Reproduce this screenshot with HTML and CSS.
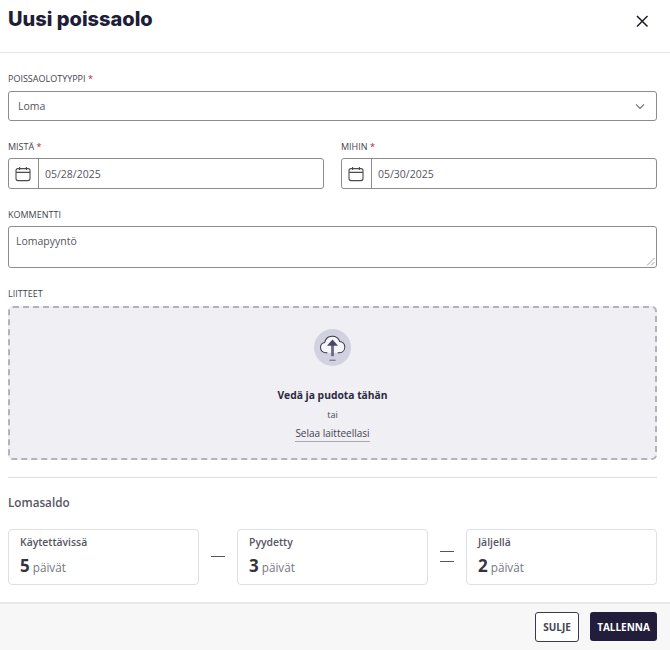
FILE: index.html
```html
<!DOCTYPE html>
<html lang="fi">
<head>
<meta charset="utf-8">
<title>Uusi poissaolo</title>
<link rel="stylesheet" href="styles.css">
</head>
<body>
<div class="dialog">
  <header class="head">
    <h1 class="title">Uusi poissaolo</h1>
    <button class="close" aria-label="Sulje">
      <svg width="14" height="14" viewBox="0 0 14 14"><path d="M2 2 12.5 12.5M12.5 2 2 12.5" stroke="#1c1c28" stroke-width="1.5" fill="none"/></svg>
    </button>
  </header>
  <main class="body">
    <div class="field type-field">
      <label class="label">POISSAOLOTYYPPI <span class="req">*</span></label>
      <div class="box select">
        <span>Loma</span>
        <svg width="10" height="7" viewBox="0 0 12 8"><path d="M1.2 1.5 6 6.2 10.8 1.5" stroke="#6d6d76" stroke-width="1.4" fill="none"/></svg>
      </div>
    </div>
    <div class="dates">
      <div class="field">
        <label class="label tight">MISTÄ <span class="req">*</span></label>
        <div class="box date">
          <span class="cal">
            <svg width="16" height="16" viewBox="0 0 16 16" fill="none" stroke="#4a4a55" stroke-width="1.1"><rect x="1" y="2.6" width="14" height="12" rx="2"/><path d="M1 6.4H15M4.6 1V4M11.4 1V4"/></svg>
          </span>
          <span class="date-val">05/28/2025</span>
        </div>
      </div>
      <div class="field">
        <label class="label tight">MIHIN <span class="req">*</span></label>
        <div class="box date">
          <span class="cal">
            <svg width="16" height="16" viewBox="0 0 16 16" fill="none" stroke="#4a4a55" stroke-width="1.1"><rect x="1" y="2.6" width="14" height="12" rx="2"/><path d="M1 6.4H15M4.6 1V4M11.4 1V4"/></svg>
          </span>
          <span class="date-val">05/30/2025</span>
        </div>
      </div>
    </div>
    <div class="field comment-field">
      <label class="label tight">KOMMENTTI</label>
      <div class="box area">
        <span>Lomapyyntö</span>
        <svg class="grip" width="9" height="9" viewBox="0 0 9 9"><path d="M8.5 1 1 8.5M8.5 5 5 8.5" stroke="#a0a0a0" stroke-width="1" fill="none"/></svg>
      </div>
    </div>
    <div class="field attach-field">
      <label class="label">LIITTEET</label>
      <div class="drop">
        <span class="drop-icon">
          <svg width="37" height="37" viewBox="0 0 36 36">
            <circle cx="18" cy="18" r="18" fill="#d2d1e0"/>
            <path d="M13 23H11a5 5 0 0 1-.6-9.9 7.6 7.6 0 0 1 14.6-1 5.5 5.5 0 0 1 .4 10.9H23" fill="#f6f6fa" stroke="#3d3a55" stroke-width="1"/>
            <path d="M18 15V26.5" stroke="#6f6a92" stroke-width="2.8" fill="none"/>
            <path d="M12.6 16.4 18 10.2 23.4 16.4Z" fill="#4a4568"/>
            <path d="M15 30.4H21" stroke="#77748f" stroke-width="1.2"/>
          </svg>
        </span>
        <strong class="drop-title">Vedä ja pudota tähän</strong>
        <span class="drop-or">tai</span>
        <span class="drop-link">Selaa laitteellasi</span>
      </div>
    </div>
    <hr class="rule">
    <h2 class="section">Lomasaldo</h2>
    <div class="balance">
      <div class="card">
        <div class="card-label">Käytettävissä</div>
        <div class="card-val"><b>5</b> päivät</div>
      </div>
      <div class="op"><span class="minus"></span></div>
      <div class="card">
        <div class="card-label">Pyydetty</div>
        <div class="card-val"><b>3</b> päivät</div>
      </div>
      <div class="op"><span class="equals"></span></div>
      <div class="card">
        <div class="card-label">Jäljellä</div>
        <div class="card-val"><b>2</b> päivät</div>
      </div>
    </div>
  </main>
  <footer class="foot">
    <button class="btn ghost">SULJE</button>
    <button class="btn primary">TALLENNA</button>
  </footer>
</div>
</body>
</html>
```
FILE: styles.css
```css
* { box-sizing: border-box; }
html, body { margin: 0; padding: 0; background: #fff; }
body { font-family: "Open Sans", "Noto Sans", sans-serif; color: #4a4a55; }
.dialog { width: 670px; height: 650px; display: flex; flex-direction: column; overflow: hidden; }
.head { height: 53px; flex: none; padding: 0 21px 0 8px; border-bottom: 1px solid #e6e6e6; display: flex; justify-content: space-between; align-items: flex-start; }
.title { margin: 4px 0 0; font: 800 20px/30px Inter, "Liberation Sans", sans-serif; color: #201d38; }
.close { margin-top: 14px; padding: 0; border: 0; background: none; width: 14px; height: 14px; display: block; }
.close svg { display: block; }
.body { flex: 1; padding: 19px 13px 0 8px; display: flex; flex-direction: column; }
.field { display: flex; flex-direction: column; min-width: 0; }
.label { font-size: 9px; line-height: 14px; color: #44444e; margin-bottom: 5px; height: 14px; }
.label.tight { margin-bottom: 4px; }
.req { color: #b3261e; }
.box { border: 1px solid #8c8c8c; border-radius: 3px; background: #fff; font-size: 10.5px; color: #55555f; }
.select { height: 30px; display: flex; align-items: center; justify-content: space-between; padding: 0 11px 0 9px; }
.dates { display: grid; grid-template-columns: 316px 316px; gap: 17px; margin-top: 19px; }
.date { height: 31px; display: flex; align-items: stretch; }
.cal { width: 30px; flex: none; border-right: 1px solid #8c8c8c; display: flex; align-items: center; justify-content: center; padding-right: 2px; }
.date-val { display: flex; align-items: center; padding-left: 6px; }
.comment-field { margin-top: 19px; }
.area { height: 42px; position: relative; padding: 6px 7px; line-height: 16px; }
.grip { position: absolute; right: 1px; bottom: 1px; }
.attach-field { margin-top: 19px; }
.drop { height: 154px; border: 2px dashed #b4b3bd; border-radius: 5px; background: #f0eff4; display: flex; flex-direction: column; align-items: center; padding-top: 21px; }
.drop-icon { width: 37px; height: 37px; display: block; }
.drop-icon svg { display: block; }
.drop-title { margin-top: 21px; font-size: 10.3px; line-height: 16px; font-weight: 700; color: #2c2a40; }
.drop-or { margin-top: 6px; font-size: 9px; line-height: 12px; color: #4a4a55; }
.drop-link { margin-top: 5px; font-size: 10px; line-height: 14px; color: #45434f; border-bottom: 1px solid #a9a9b3; padding-bottom: 1px; }
.rule { border: 0; border-top: 1px solid #e0e0e0; margin: 17px 0 0; height: 0; }
.section { margin: 16px 0 0; font-size: 11.7px; line-height: 17px; font-weight: 600; color: #55555f; }
.balance { display: grid; grid-template-columns: 191px 38px 191px 38px 191px; margin-top: 18px; }
.card { height: 56px; border: 1px solid #e0e0e4; border-radius: 4px; padding: 5px 11px; }
.card-label { font-size: 10.4px; line-height: 15px; font-weight: 600; color: #55555f; }
.card-val { margin-top: 4px; font-size: 11.7px; line-height: 24px; color: #77777f; }
.card-val b { font-size: 17px; font-weight: 700; color: #33323f; }
.op { display: flex; align-items: center; justify-content: center; padding-bottom: 1px; }
.minus { width: 14px; height: 1px; background: #55555f; }
.equals { width: 14px; height: 11px; border-top: 1px solid #55555f; border-bottom: 1px solid #55555f; }
.foot { height: 48px; flex: none; background: #f7f7f7; border-top: 2px solid #e8e8e8; display: flex; justify-content: flex-end; align-items: center; gap: 11px; padding: 0 13px 1px 0; }
.btn { font-family: "Open Sans", "Noto Sans", sans-serif; font-size: 10px; font-weight: 700; border-radius: 3px; padding: 0; }
.ghost { width: 44px; height: 30px; background: #fff; border: 1px solid #3b3a48; color: #44434f; }
.primary { width: 67px; height: 29px; background: #221d3b; border: 0; color: #fff; }
```
